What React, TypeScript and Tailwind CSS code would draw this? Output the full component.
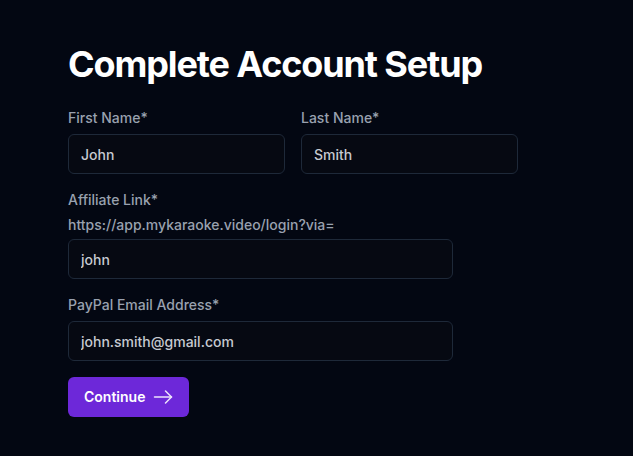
import React from "react";

const inputCls =
  "h-10 w-full rounded-md border border-gray-800 bg-[#060912] px-3 text-sm font-medium text-[#c6cad1] outline-none";

export default function App() {
  return (
    <div
      className="min-h-screen w-full bg-[#030712] pl-[68px] pt-[44px]"
      style={{ fontFamily: "Inter, 'Noto Sans', sans-serif" }}
    >
      <h1 className="mb-6 text-4xl font-bold leading-10 tracking-[-0.031em] text-white">
        Complete Account Setup
      </h1>
      <div className="flex w-[450px] gap-4">
        <div className="flex-1">
          <label className="mb-1.5 block text-sm font-medium text-gray-400">First Name*</label>
          <input className={inputCls} defaultValue="John" />
        </div>
        <div className="flex-1">
          <label className="mb-1.5 block text-sm font-medium text-gray-400">Last Name*</label>
          <input className={inputCls} defaultValue="Smith" />
        </div>
      </div>
      <div className="mt-4 w-[385px]">
        <label className="block text-sm font-medium text-gray-400">Affiliate Link*</label>
        <div className="mt-[5px] mb-1 text-sm font-medium text-gray-400">
          https://app.mykaraoke.video/login?via=
        </div>
        <input className={inputCls} defaultValue="john" />
      </div>
      <div className="mt-4 w-[385px]">
        <label className="mb-1.5 block text-sm font-medium text-gray-400">PayPal Email Address*</label>
        <input className={inputCls} defaultValue="john.smith@gmail.com" />
      </div>
      <button className="mt-4 flex h-10 items-center gap-2 rounded-md bg-[#6d28d9] pl-4 pr-4 text-sm font-semibold text-white">
        Continue
        <svg width="20" height="20" viewBox="0 0 20 20" fill="none" stroke="#ede4fb" strokeWidth="1.5" strokeLinecap="round" strokeLinejoin="round">
          <path d="M1.5 10h17" />
          <path d="M12.5 4l6 6-6 6" />
        </svg>
      </button>
    </div>
  );
}
